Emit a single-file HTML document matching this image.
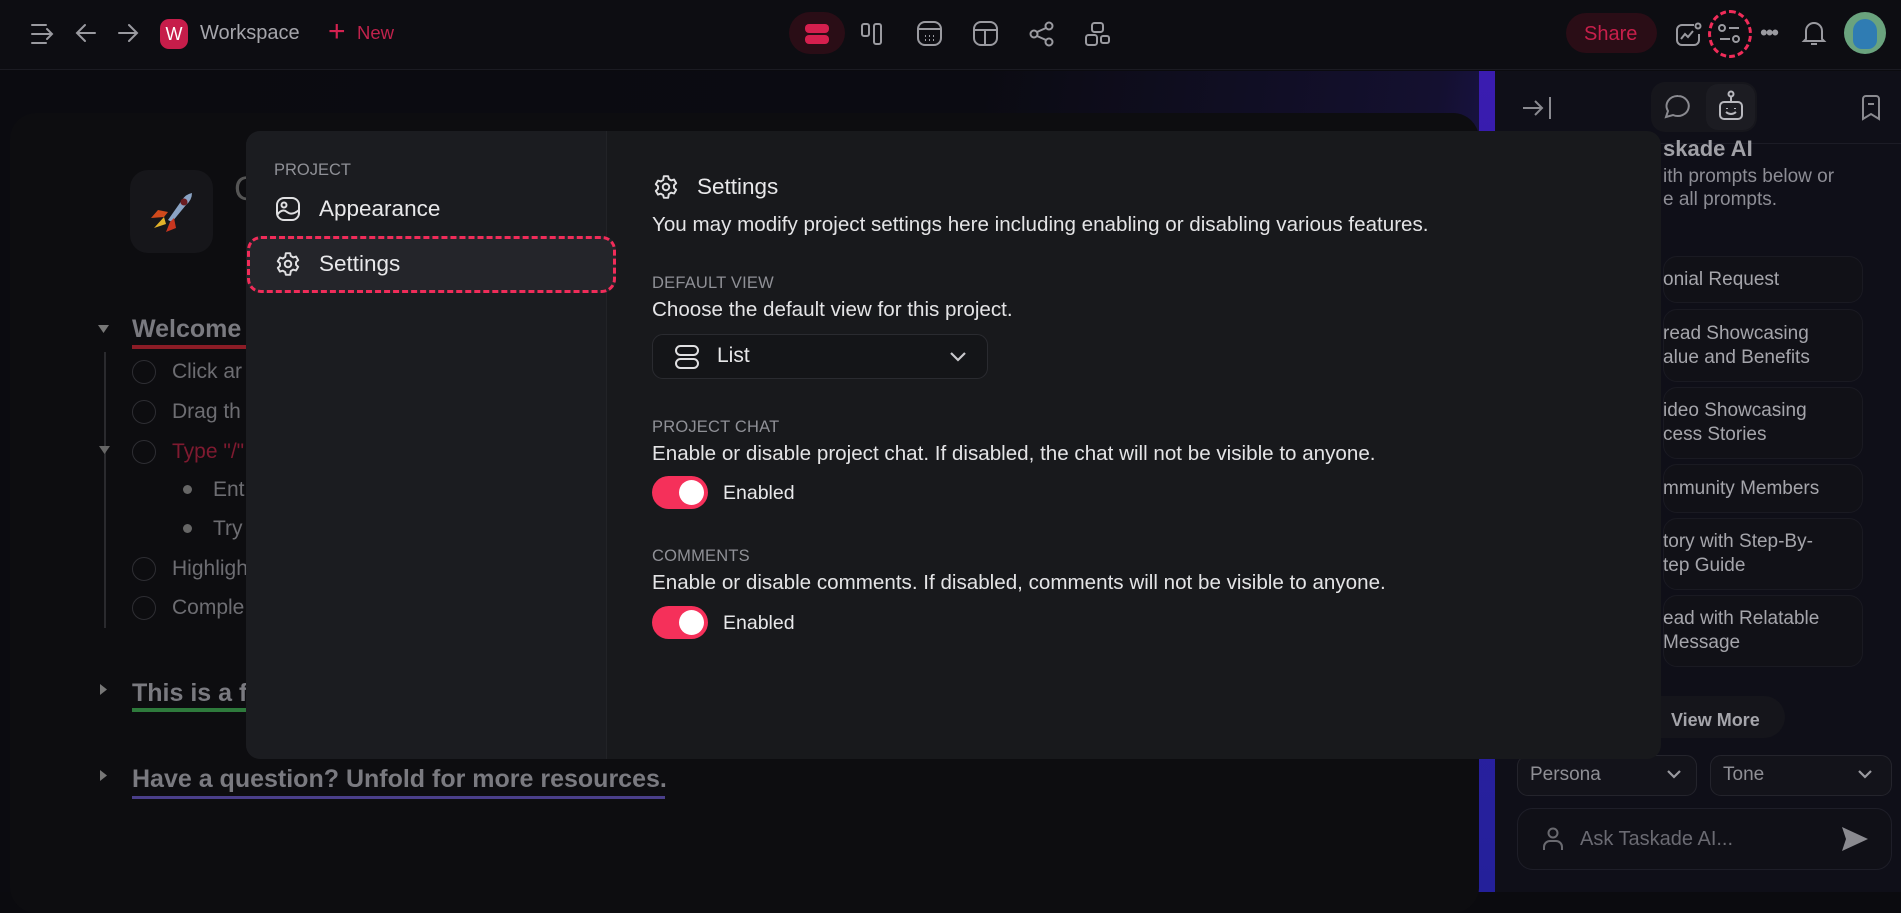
<!DOCTYPE html>
<html><head><meta charset="utf-8"><style>
*{margin:0;padding:0;box-sizing:border-box}
body{width:1901px;height:892px;overflow:hidden;background:#0b0b0f;font-family:"Liberation Sans",sans-serif;position:relative;color:#e6e6e8}
.a{position:absolute}
.t{position:absolute;white-space:nowrap}
svg{position:absolute;overflow:visible}
.card{position:absolute;left:1663px;width:200px;border-radius:14px;background:#111117;border:1px solid #1a1a22}
.ct{position:absolute;left:1663px;color:#8d8d95;font-size:19px;line-height:24px;white-space:nowrap}
.circ{position:absolute;width:24px;height:24px;border:1.5px solid #2e2e33;border-radius:50%}
.li{position:absolute;font-size:21px;color:#6d6d72;white-space:nowrap}
.lbl{position:absolute;left:652px;font-size:16.5px;color:#8f9096;letter-spacing:.2px}
.desc{position:absolute;left:652px;font-size:20.6px;color:#e4e4e6;white-space:nowrap}
.tog{position:absolute;left:652px;width:56px;height:33px;border-radius:17px;background:#f5305a}
.tog:after{content:"";position:absolute;right:4px;top:4px;width:25px;height:25px;border-radius:50%;background:#fff}
</style></head><body>
<!-- top bar -->
<div class="a" style="left:0;top:0;width:1901px;height:70px;background:#0d0d12;border-bottom:1px solid #1b1b22"></div>
<svg style="left:30px;top:22px" width="28" height="24" fill="none" stroke="#9a9aa0" stroke-width="2" stroke-linecap="round"><path d="M2 3h14M2 12h20M2 21h14M17 7l5 5-5 5"/></svg>
<svg style="left:75px;top:22px" width="22" height="22" fill="none" stroke="#9a9aa0" stroke-width="2" stroke-linecap="round"><path d="M20 11H3M10 3l-8 8 8 8"/></svg>
<svg style="left:117px;top:22px" width="22" height="22" fill="none" stroke="#9a9aa0" stroke-width="2" stroke-linecap="round"><path d="M2 11h17M12 3l8 8-8 8"/></svg>
<div class="a" style="left:160px;top:19px;width:28px;height:30px;border-radius:9px;background:#c61d4a;color:#fff;font-size:18px;text-align:center;line-height:30px">W</div>
<div class="t" style="left:200px;top:22px;font-size:20px;color:#a5a5ab">Workspace</div>
<div class="t" style="left:328px;top:17px;font-size:30px;color:#d42150;line-height:30px">+</div>
<div class="t" style="left:357px;top:22px;font-size:18.5px;color:#c0224c">New</div>
<div class="a" style="left:789px;top:12px;width:56px;height:42px;border-radius:21px;background:#2a0d16"></div>
<div class="a" style="left:805px;top:24px;width:24px;height:9px;border-radius:4px;background:#d51f4e"></div>
<div class="a" style="left:805px;top:35px;width:24px;height:9px;border-radius:4px;background:#d51f4e"></div>
<svg style="left:861px;top:22px" width="26" height="24" fill="none" stroke="#9a9aa0" stroke-width="2"><rect x="1" y="2" width="7" height="12" rx="2"/><rect x="13" y="2" width="7" height="20" rx="2"/></svg>
<svg style="left:917px;top:21px" width="26" height="26" fill="none" stroke="#9a9aa0" stroke-width="2"><rect x="1" y="1" width="23" height="23" rx="7"/><path d="M1 8h23"/><path d="M8 15h1M12 15h1M16 15h1M8 19h1M12 19h1M16 19h1"/></svg>
<svg style="left:973px;top:21px" width="26" height="26" fill="none" stroke="#9a9aa0" stroke-width="2"><rect x="1" y="1" width="23" height="23" rx="7"/><path d="M1 9h23M12 9v15"/></svg>
<svg style="left:1029px;top:21px" width="26" height="26" fill="none" stroke="#9a9aa0" stroke-width="2"><circle cx="5" cy="13" r="3.5"/><circle cx="20" cy="5" r="3.5"/><circle cx="20" cy="21" r="3.5"/><path d="M8 11l9-4M8 15l9 4"/></svg>
<svg style="left:1085px;top:22px" width="26" height="24" fill="none" stroke="#9a9aa0" stroke-width="2"><rect x="7" y="1" width="11" height="9" rx="2.5"/><rect x="1" y="13" width="11" height="10" rx="2.5"/><rect x="16" y="14" width="8" height="7" rx="2"/></svg>
<div class="a" style="left:1566px;top:13px;width:91px;height:40px;border-radius:20px;background:#2a0d16"></div>
<div class="t" style="left:1584px;top:23px;font-size:20px;color:#c81f4b">Share</div>
<svg style="left:1675px;top:22px" width="28" height="26" fill="none" stroke="#9a9aa0" stroke-width="2"><path d="M19 3H7a5 5 0 0 0-5 5v10a5 5 0 0 0 5 5h12a5 5 0 0 0 5-5v-6"/><circle cx="23" cy="4" r="2.5"/><path d="M6 17l4-5 3 3 5-6"/></svg>
<div class="a" style="left:1708px;top:10px;width:44px;height:48px;border-radius:50%;border:3px dashed #f02c59"></div>
<svg style="left:1717px;top:24px" width="26" height="20" fill="none" stroke="#9a9aa0" stroke-width="2"><circle cx="5" cy="4" r="3"/><path d="M12 4h10M3 15h10"/><circle cx="19" cy="15" r="3"/></svg>
<div class="t" style="left:1760px;top:20px;font-size:22px;color:#9a9aa0;letter-spacing:-2px">•••</div>
<svg style="left:1802px;top:20px" width="24" height="28" fill="none" stroke="#9a9aa0" stroke-width="2"><path d="M4 19V11a8 8 0 0 1 16 0v8l2 2H2z M9 24h6"/></svg>
<div class="a" style="left:1844px;top:12px;width:42px;height:42px;border-radius:50%;background:#6aa37e"></div>
<div class="a" style="left:1853px;top:19px;width:24px;height:30px;border-radius:12px 12px 9px 9px;background:#2f7cb3"></div>
<!-- background area -->
<div class="a" style="left:0;top:71px;width:1495px;height:821px;background:linear-gradient(100deg,#0b0b10 0%,#0b0b12 60%,#141030 88%,#22186e 100%)"></div>
<div class="a" style="left:1479px;top:71px;width:16px;height:821px;background:linear-gradient(#3a1cb0,#24209a)"></div>
<div class="a" style="left:10px;top:113px;width:1469px;height:800px;border-radius:26px;background:#0d0d10"></div>
<div class="a" style="left:130px;top:170px;width:83px;height:83px;border-radius:18px;background:#16161a"></div>
<svg style="left:148px;top:190px" width="46" height="44"><path d="M20 30 L34 10 Q38 4 44 3 Q44 10 38 15 L24 32Z" fill="#8aa3c4"/><circle cx="36" cy="12" r="3.5" fill="#6a1c20"/><path d="M20 22 L10 20 L3 28 L16 27Z" fill="#d04a1c"/><path d="M22 32 L18 42 L28 38 L26 28Z" fill="#c8361f"/><path d="M16 27 L6 38 L18 34Z" fill="#e2b22a"/></svg>
<div class="t" style="left:234px;top:170px;font-size:34px;color:#555">C</div>
<!-- list -->
<svg style="left:98px;top:325px" width="12" height="10"><path d="M0 0h11L5.5 8z" fill="#777"/></svg>
<div class="t" style="left:132px;top:315px;font-size:25px;font-weight:bold;color:#7a7a80">Welcome</div>
<div class="a" style="left:132px;top:345px;width:120px;height:4px;background:#8c1c26"></div>
<div class="a" style="left:104px;top:352px;width:1.5px;height:276px;background:#2a2a2e"></div>
<div class="circ" style="left:132px;top:360px"></div><div class="li" style="left:172px;top:360px">Click ar</div>
<div class="circ" style="left:132px;top:400px"></div><div class="li" style="left:172px;top:400px">Drag th</div>
<svg style="left:99px;top:446px" width="12" height="10"><path d="M0 0h11L5.5 8z" fill="#666"/></svg>
<div class="circ" style="left:132px;top:440px"></div><div class="li" style="left:172px;top:440px;color:#7f1a30">Type "/"</div>
<div class="a" style="left:183px;top:485px;width:9px;height:9px;border-radius:50%;background:#666"></div><div class="li" style="left:213px;top:478px">Ent</div>
<div class="a" style="left:183px;top:524px;width:9px;height:9px;border-radius:50%;background:#666"></div><div class="li" style="left:213px;top:517px">Try</div>
<div class="circ" style="left:132px;top:557px"></div><div class="li" style="left:172px;top:557px">Highligh</div>
<div class="circ" style="left:132px;top:596px"></div><div class="li" style="left:172px;top:596px">Comple</div>
<svg style="left:100px;top:684px" width="10" height="12"><path d="M0 0v11l7-5.5z" fill="#777"/></svg>
<div class="t" style="left:132px;top:679px;font-size:25px;font-weight:bold;color:#7a7a80">This is a f</div>
<div class="a" style="left:132px;top:708px;width:120px;height:4px;background:#2e7a3c"></div>
<svg style="left:100px;top:770px" width="10" height="12"><path d="M0 0v11l7-5.5z" fill="#777"/></svg>
<div class="t" style="left:132px;top:765px;font-size:25px;font-weight:bold;color:#7a7a80">Have a question? Unfold for more resources.</div>
<div class="a" style="left:132px;top:796px;width:533px;height:3px;background:#4a3f8a"></div>
<!-- right panel -->
<div class="a" style="left:1495px;top:71px;width:406px;height:821px;background:#0f0f18"></div>
<div class="a" style="left:1495px;top:143px;width:406px;height:1px;background:#1c1c26"></div>
<svg style="left:1522px;top:95px" width="30" height="26" fill="none" stroke="#8a8a90" stroke-width="2"><path d="M1 13h19M13 6l7 7-7 7M28 2v22"/></svg>
<div class="a" style="left:1651px;top:82px;width:106px;height:50px;border-radius:14px;background:#16161c"></div>
<div class="a" style="left:1706px;top:84px;width:49px;height:46px;border-radius:12px;background:#1c1c22"></div>
<svg style="left:1664px;top:94px" width="28" height="26" fill="none" stroke="#8a8a90" stroke-width="2"><path d="M14 2a11 10 0 1 1-5 19l-7 2 2-6A11 10 0 0 1 14 2z"/></svg>
<svg style="left:1718px;top:90px" width="26" height="32" fill="none" stroke="#b8b8be" stroke-width="2"><circle cx="13" cy="4" r="2.5"/><path d="M13 7v5"/><rect x="2" y="12" width="22" height="17" rx="4"/><path d="M8 22q5 4 10 0M9 18v1M17 18v1"/></svg>
<svg style="left:1861px;top:95px" width="20" height="26" fill="none" stroke="#8a8a90" stroke-width="2"><path d="M2 4a3 3 0 0 1 3-3h10a3 3 0 0 1 3 3v20l-8-5-8 5z M7 9h6"/></svg>
<div class="t" style="left:1663px;top:136px;font-size:22px;font-weight:bold;color:#a0a0a6">skade AI</div>
<div class="ct" style="top:165px">ith prompts below or</div>
<div class="ct" style="top:188px">e all prompts.</div>
<div class="card" style="top:256px;height:47px"></div><div class="ct" style="top:268px;color:#a5a5ab">onial Request</div>
<div class="card" style="top:309px;height:73px"></div><div class="ct" style="top:322px;color:#a5a5ab">read Showcasing<br>alue and Benefits</div>
<div class="card" style="top:387px;height:72px"></div><div class="ct" style="top:399px;color:#a5a5ab">ideo Showcasing<br>cess Stories</div>
<div class="card" style="top:464px;height:49px"></div><div class="ct" style="top:477px;color:#a5a5ab">mmunity Members</div>
<div class="card" style="top:518px;height:72px"></div><div class="ct" style="top:530px;color:#a5a5ab">tory with Step-By-<br>tep Guide</div>
<div class="card" style="top:595px;height:72px"></div><div class="ct" style="top:607px;color:#a5a5ab">ead with Relatable<br>Message</div>
<div class="a" style="left:1640px;top:696px;width:145px;height:42px;border-radius:21px;background:#15151b"></div>
<div class="t" style="left:1671px;top:710px;font-size:18px;font-weight:bold;color:#a5a5ab">View More</div>
<div class="a" style="left:1517px;top:755px;width:180px;height:41px;border-radius:11px;background:#13131a;border:1px solid #24242c"></div>
<div class="t" style="left:1530px;top:764px;font-size:19px;color:#8f8f95">Persona</div>
<svg style="left:1667px;top:770px" width="14" height="9" fill="none" stroke="#9a9aa0" stroke-width="2.2"><path d="M1 1l6 6 6-6"/></svg>
<div class="a" style="left:1710px;top:755px;width:182px;height:41px;border-radius:11px;background:#13131a;border:1px solid #24242c"></div>
<div class="t" style="left:1723px;top:764px;font-size:19px;color:#8f8f95">Tone</div>
<svg style="left:1858px;top:770px" width="14" height="9" fill="none" stroke="#9a9aa0" stroke-width="2.2"><path d="M1 1l6 6 6-6"/></svg>
<div class="a" style="left:1517px;top:808px;width:375px;height:62px;border-radius:16px;background:#101017;border:1px solid #1e1e28"></div>
<svg style="left:1543px;top:827px" width="20" height="24" fill="none" stroke="#6a6a70" stroke-width="2"><circle cx="10" cy="6" r="4.5"/><path d="M1 23v-3a6 6 0 0 1 6-6h6a6 6 0 0 1 6 6v3"/></svg>
<div class="t" style="left:1580px;top:828px;font-size:20px;color:#6a6a72">Ask Taskade AI...</div>
<svg style="left:1842px;top:827px" width="26" height="24"><path d="M0 0l26 12L0 24l4-12z" fill="#8a8a90"/></svg>
<!-- modal -->
<div class="a" style="left:246px;top:131px;width:1415px;height:628px;border-radius:14px;background:#18191c;overflow:hidden">
 <div class="a" style="left:0;top:0;width:361px;height:628px;background:#1b1c20;border-right:1px solid #222327"></div>
</div>
<div class="t" style="left:274px;top:161px;font-size:16.5px;color:#8f9096">PROJECT</div>
<svg style="left:276px;top:197px" width="24" height="24" fill="none" stroke="#e0e0e2" stroke-width="2"><rect x="1" y="1" width="22" height="22" rx="7"/><circle cx="8" cy="8" r="2.5"/><path d="M1 18q5-7 10-3t12-2"/></svg>
<div class="t" style="left:319px;top:196px;font-size:22.5px;color:#e8e8ea">Appearance</div>
<div class="a" style="left:247px;top:236px;width:369px;height:57px;border-radius:14px;background:#24252a;border:3px dashed #f02c59"></div>
<svg style="left:275px;top:251px" width="26" height="26" viewBox="0 0 24 24" fill="none" stroke="#e0e0e2" stroke-width="1.8" stroke-linejoin="round"><path d="M10 2h4l.6 2.6 2.2 1.3 2.6-.8 2 3.4-2 1.8v2.5l2 1.8-2 3.4-2.6-.8-2.2 1.3L14 22h-4l-.6-2.5-2.2-1.3-2.6.8-2-3.4 2-1.8V11.3l-2-1.8 2-3.4 2.6.8 2.2-1.3z"/><circle cx="12" cy="12" r="3"/></svg>
<div class="t" style="left:319px;top:251px;font-size:22.5px;color:#e8e8ea">Settings</div>
<svg style="left:653px;top:174px" width="26" height="26" viewBox="0 0 24 24" fill="none" stroke="#e0e0e2" stroke-width="1.8" stroke-linejoin="round"><path d="M10 2h4l.6 2.6 2.2 1.3 2.6-.8 2 3.4-2 1.8v2.5l2 1.8-2 3.4-2.6-.8-2.2 1.3L14 22h-4l-.6-2.5-2.2-1.3-2.6.8-2-3.4 2-1.8V11.3l-2-1.8 2-3.4 2.6.8 2.2-1.3z"/><circle cx="12" cy="12" r="3"/></svg>
<div class="t" style="left:697px;top:174px;font-size:22.5px;color:#e8e8ea">Settings</div>
<div class="desc" style="top:213px">You may modify project settings here including enabling or disabling various features.</div>
<div class="lbl" style="top:274px">DEFAULT VIEW</div>
<div class="desc" style="top:298px">Choose the default view for this project.</div>
<div class="a" style="left:652px;top:334px;width:336px;height:45px;border-radius:11px;background:#141518;border:1px solid #2a2b30"></div>
<svg style="left:675px;top:345px" width="24" height="24" fill="none" stroke="#e0e0e2" stroke-width="2"><rect x="1" y="1" width="22" height="9" rx="4.5"/><rect x="1" y="14" width="22" height="9" rx="4.5"/></svg>
<div class="t" style="left:717px;top:344px;font-size:21px;color:#e8e8ea">List</div>
<svg style="left:950px;top:352px" width="16" height="10" fill="none" stroke="#c8c8cc" stroke-width="2.2"><path d="M1 1l7 7 7-7"/></svg>
<div class="lbl" style="top:418px">PROJECT CHAT</div>
<div class="desc" style="top:442px">Enable or disable project chat. If disabled, the chat will not be visible to anyone.</div>
<div class="tog" style="top:476px"></div>
<div class="t" style="left:723px;top:482px;font-size:19.5px;color:#e8e8ea">Enabled</div>
<div class="lbl" style="top:547px">COMMENTS</div>
<div class="desc" style="top:571px">Enable or disable comments. If disabled, comments will not be visible to anyone.</div>
<div class="tog" style="top:606px"></div>
<div class="t" style="left:723px;top:612px;font-size:19.5px;color:#e8e8ea">Enabled</div>
</body></html>
